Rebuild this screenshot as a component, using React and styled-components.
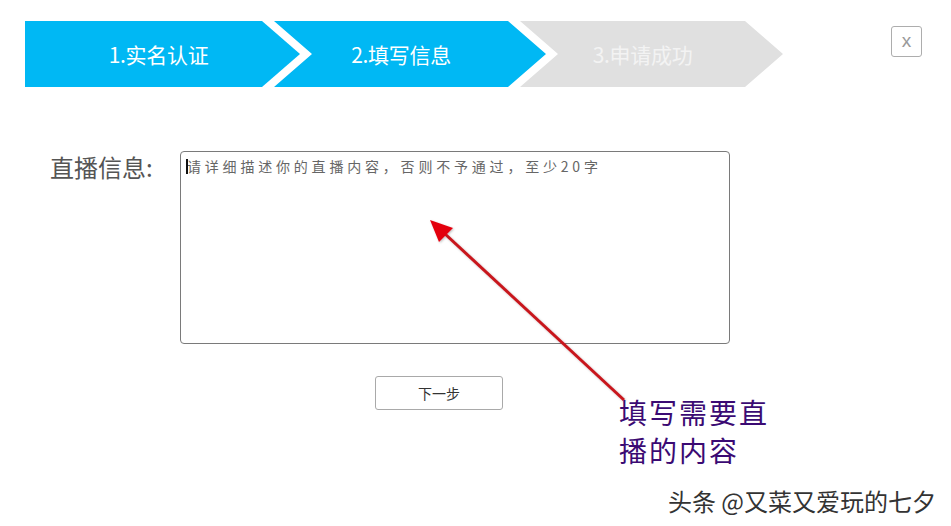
import React from 'react';
import styled, { createGlobalStyle } from 'styled-components';

const GlobalStyle = createGlobalStyle`
  html, body {
    margin: 0;
    padding: 0;
    background: #ffffff;
    font-family: "Noto Sans CJK SC", "Noto Sans", sans-serif;
  }
`;

const Page = styled.div`
  position: relative;
  width: 951px;
  height: 526px;
  overflow: hidden;
  background: #fff;
`;

const Header = styled.div`
  display: flex;
  justify-content: space-between;
  align-items: flex-start;
  padding: 21px 29px 0 25px;
`;

const Steps = styled.div`
  display: flex;
`;

const Step = styled.div`
  width: ${p => p.$width}px;
  height: 66px;
  margin-left: ${p => (p.$first ? 0 : -26)}px;
  padding-right: ${p => (p.$first ? 8 : 18)}px;
  box-sizing: border-box;
  display: flex;
  align-items: center;
  justify-content: center;
  background: ${p => (p.$active ? '#00b8f4' : '#e0e0e0')};
  color: ${p => (p.$active ? '#ffffff' : '#f3f3f3')};
  font-size: 21px;
  letter-spacing: -0.3px;
  clip-path: ${p =>
    p.$first
      ? 'polygon(0 0, calc(100% - 38px) 0, 100% 50%, calc(100% - 38px) 100%, 0 100%)'
      : 'polygon(0 0, calc(100% - 38px) 0, 100% 50%, calc(100% - 38px) 100%, 0 100%, 38px 50%)'};
`;

const CloseButton = styled.button`
  margin-top: 5px;
  width: 31px;
  height: 31px;
  padding: 0 0 3px;
  border: 1px solid #adadad;
  border-radius: 3px;
  background: #fff;
  color: #999;
  font-family: "Liberation Sans", sans-serif;
  font-size: 19px;
  line-height: 1;
  cursor: pointer;
`;

const FormRow = styled.div`
  display: flex;
  align-items: flex-start;
  margin-top: 64px;
  padding-left: 50px;
`;

const Label = styled.label`
  width: 130px;
  padding-top: 0;
  font-size: 24px;
  line-height: 32px;
  color: #555;
`;

const AreaWrap = styled.div`
  position: relative;
`;

const Area = styled.textarea`
  display: block;
  width: 550px;
  height: 193px;
  box-sizing: border-box;
  margin: 0;
  padding: 4px 6px;
  border: 1px solid #7a7a7a;
  border-radius: 4px;
  resize: none;
  outline: none;
  font-family: "Noto Sans CJK SC", sans-serif;
  font-size: 14px;
  letter-spacing: 3.8px;
  line-height: 20px;
  color: #333;

  &::placeholder {
    color: #666;
  }
`;

const Caret = styled.span`
  position: absolute;
  left: 6px;
  top: 8px;
  width: 2px;
  height: 15px;
  background: #111;
`;

const ButtonRow = styled.div`
  padding: 32px 0 0 375px;
`;

const NextButton = styled.button`
  width: 128px;
  height: 34px;
  border: 1px solid #a9a9a9;
  border-radius: 3px;
  background: #fff;
  color: #333;
  font-family: "Noto Sans CJK SC", sans-serif;
  font-size: 14px;
  cursor: pointer;
`;

const ArrowLayer = styled.svg`
  position: absolute;
  left: 0;
  top: 0;
  pointer-events: none;
`;

const Note = styled.div`
  position: absolute;
  left: 619px;
  top: 393px;
  font-size: 28px;
  line-height: 38px;
  color: #3b0a73;
  letter-spacing: 2px;
`;

const Watermark = styled.div`
  position: absolute;
  right: 15px;
  bottom: 10px;
  font-size: 24px;
  line-height: 30px;
  color: #333;
  text-shadow: 1px 1px 0 #fff, -1px -1px 0 #fff, 1px -1px 0 #fff, -1px 1px 0 #fff;
`;

const steps = [
  { label: '1.实名认证', active: true, width: 275 },
  { label: '2.填写信息', active: true, width: 272 },
  { label: '3.申请成功', active: false, width: 263 },
];

export default function App() {
  return (
    <Page>
      <GlobalStyle />
      <Header>
        <Steps>
          {steps.map((s, i) => (
            <Step key={s.label} $first={i === 0} $active={s.active} $width={s.width}>
              {s.label}
            </Step>
          ))}
        </Steps>
        <CloseButton>x</CloseButton>
      </Header>

      <FormRow>
        <Label>直播信息:</Label>
        <AreaWrap>
          <Area placeholder="请详细描述你的直播内容，否则不予通过，至少20字" />
          <Caret />
        </AreaWrap>
      </FormRow>

      <ButtonRow>
        <NextButton>下一步</NextButton>
      </ButtonRow>

      <ArrowLayer width="951" height="526" viewBox="0 0 951 526">
        <defs>
          <filter id="shadow" x="-10%" y="-10%" width="120%" height="120%">
            <feDropShadow dx="1" dy="1" stdDeviation="1" floodColor="#000" floodOpacity="0.25" />
          </filter>
        </defs>
        <g filter="url(#shadow)">
          <line x1="624" y1="400" x2="444" y2="233" stroke="#c8161d" strokeWidth="3" />
          <polygon points="430,220 453,228 439,242" fill="#e3000f" />
        </g>
      </ArrowLayer>

      <Note>
        填写需要直
        <br />
        播的内容
      </Note>

      <Watermark>头条 @又菜又爱玩的七夕</Watermark>
    </Page>
  );
}
